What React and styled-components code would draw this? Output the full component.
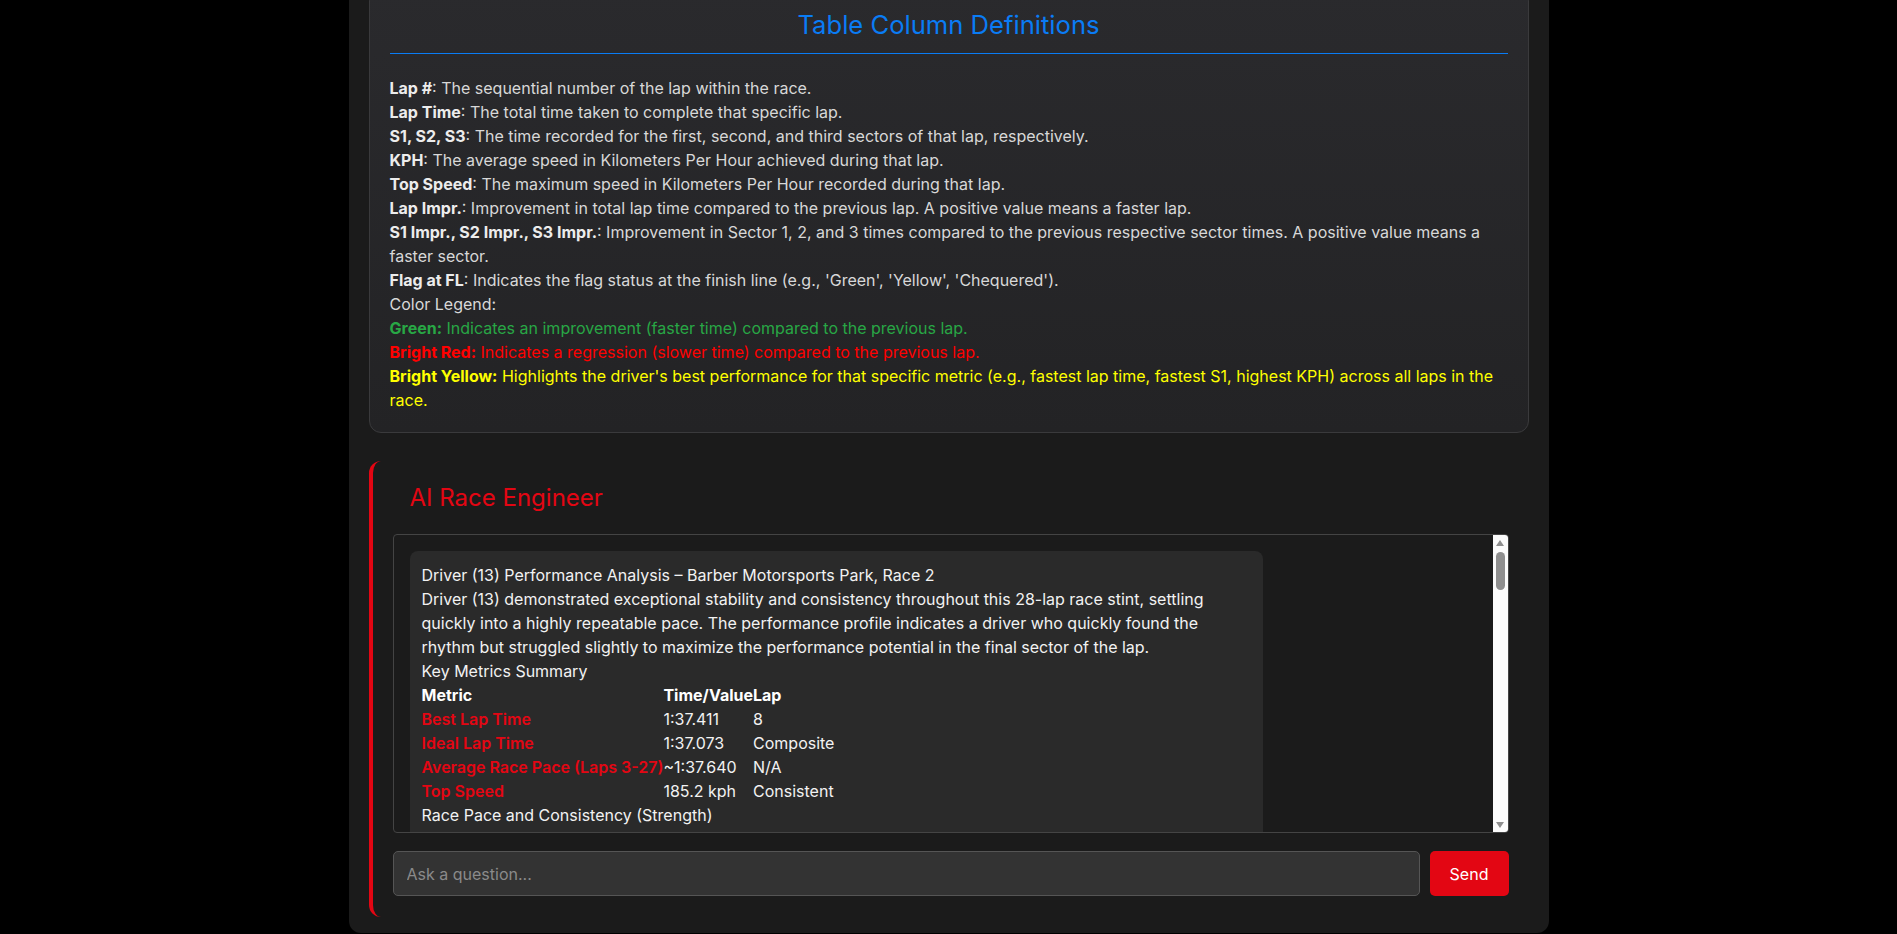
import React from "react";
import styled, { createGlobalStyle } from "styled-components";

const GlobalStyle = createGlobalStyle`
  html, body {
    margin: 0;
    padding: 0;
    background: #000;
    font-family: Inter, "Noto Sans", Arial, sans-serif;
    color: #e0e0e0;
  }
  * { box-sizing: border-box; }
`;

const Page = styled.div`
  width: 1200px;
  margin: -31px auto 0;
  background: #1b1b1b;
  border-radius: 0 0 12px 12px;
  padding: 20px 20px 16px;
  display: flex;
  flex-direction: column;
  gap: 28px;
`;

const DefCard = styled.section`
  background: linear-gradient(180deg, #2a2a2d 0%, #232325 100%);
  border: 1px solid #3a3a3c;
  border-radius: 12px;
  padding: 20px 20px 20px;
`;

const DefTitle = styled.h2`
  margin: 0 0 22px;
  padding-bottom: 14px;
  border-bottom: 1px solid #0a7cf5;
  color: #0a7cf5;
  font-size: 25.6px;
  line-height: 29px;
  font-weight: 400;
  text-align: center;
`;

const DefLine = styled.div`
  font-size: 16px;
  line-height: 24px;
  color: ${(p) => p.$color || "#d8d8d8"};
  b {
    font-weight: 700;
    color: ${(p) => p.$color || "#ececec"};
  }
`;

const EngineerSection = styled.section`
  border-left: 4px solid #e30613;
  border-radius: 12px;
  padding: 22px 20px 21px 20px;
  display: flex;
  flex-direction: column;
`;

const EngineerTitle = styled.h3`
  margin: 0 0 22px 17px;
  color: #e30613;
  font-size: 24px;
  line-height: 29px;
  font-weight: 400;
`;

const ChatBox = styled.div`
  height: 299px;
  border: 1px solid #444;
  border-radius: 4px;
  background: #1b1b1b;
  display: flex;
  overflow: hidden;
`;

const ChatScroll = styled.div`
  flex: 1;
  min-width: 0;
  overflow: hidden;
  padding: 16px;
`;

const ScrollTrack = styled.div`
  width: 15px;
  flex: none;
  background: #fcfcfc;
  display: flex;
  flex-direction: column;
  align-items: center;
  padding: 5px 0 4px;
`;

const Arrow = styled.div`
  width: 0;
  height: 0;
  border-left: 4.5px solid transparent;
  border-right: 4.5px solid transparent;
  ${(p) =>
    p.$down
      ? "border-top: 6px solid #8f8f8f; margin-top: auto;"
      : "border-bottom: 6px solid #8f8f8f;"}
`;

const Thumb = styled.div`
  width: 9px;
  height: 38px;
  margin-top: 6px;
  border-radius: 5px;
  background: #8f8f8f;
`;

const Bubble = styled.div`
  width: 80%;
  background: #2a2a2a;
  border-radius: 8px;
  padding: 12px;
  color: #f2f2f2;
  font-size: 16px;
  line-height: 24px;
`;

const Para = styled.div``;

const MetricTable = styled.table`
  border-collapse: collapse;
  border-spacing: 0;
  font-size: 16px;
  line-height: 24px;
  th, td {
    padding: 0;
    text-align: left;
    vertical-align: top;
  }
  th {
    font-weight: 700;
    color: #fff;
  }
`;

const MetricName = styled.td`
  color: #e30613;
  font-weight: 600;
`;

const InputRow = styled.form`
  margin-top: 18px;
  display: flex;
  gap: 10px;
`;

const AskInput = styled.input`
  flex: 1;
  height: 45px;
  background: #333;
  border: 1px solid #555;
  border-radius: 5px;
  padding: 0 13px;
  color: #eee;
  font-family: Inter, "Noto Sans", Arial, sans-serif;
  font-size: 16px;
  outline: none;
  &::placeholder { color: #8a8a8a; }
`;

const SendButton = styled.button`
  width: 79px;
  height: 45px;
  border: none;
  border-radius: 5px;
  background: #e30613;
  color: #fff;
  font-family: Inter, "Noto Sans", Arial, sans-serif;
  font-size: 16px;
  cursor: pointer;
`;

const defs = [
  ["Lap #", "The sequential number of the lap within the race."],
  ["Lap Time", "The total time taken to complete that specific lap."],
  ["S1, S2, S3", "The time recorded for the first, second, and third sectors of that lap, respectively."],
  ["KPH", "The average speed in Kilometers Per Hour achieved during that lap."],
  ["Top Speed", "The maximum speed in Kilometers Per Hour recorded during that lap."],
  ["Lap Impr.", "Improvement in total lap time compared to the previous lap. A positive value means a faster lap."],
  ["S1 Impr., S2 Impr., S3 Impr.", "Improvement in Sector 1, 2, and 3 times compared to the previous respective sector times. A positive value means a faster sector."],
  ["Flag at FL", "Indicates the flag status at the finish line (e.g., 'Green', 'Yellow', 'Chequered')."],
];

const legend = [
  ["Green:", "Indicates an improvement (faster time) compared to the previous lap.", "#28a745"],
  ["Bright Red:", "Indicates a regression (slower time) compared to the previous lap.", "#ff0000"],
  ["Bright Yellow:", "Highlights the driver's best performance for that specific metric (e.g., fastest lap time, fastest S1, highest KPH) across all laps in the race.", "#ffff00"],
];

const metrics = [
  ["Best Lap Time", "1:37.411", "8"],
  ["Ideal Lap Time", "1:37.073", "Composite"],
  ["Average Race Pace (Laps 3-27)", "~1:37.640", "N/A"],
  ["Top Speed", "185.2 kph", "Consistent"],
];

const pace = [
  ["Phase", "Laps", "Avg. Lap (approx.)"],
  ["Opening Stint", "1-7", "1:37.9"],
  ["Mid Race", "8-20", "1:37.6"],
  ["Closing Stint", "21-28", "1:37.7"],
];

export default function App() {
  return (
    <>
      <GlobalStyle />
      <Page>
        <DefCard>
          <DefTitle>Table Column Definitions</DefTitle>
          {defs.map(([k, v]) => (
            <DefLine key={k}>
              <b>{k}</b>: {v}
            </DefLine>
          ))}
          <DefLine>Color Legend:</DefLine>
          {legend.map(([k, v, c]) => (
            <DefLine key={k} $color={c}>
              <b>{k}</b> {v}
            </DefLine>
          ))}
        </DefCard>

        <EngineerSection>
          <EngineerTitle>AI Race Engineer</EngineerTitle>
          <ChatBox>
            <ChatScroll>
              <Bubble>
                <Para>Driver (13) Performance Analysis – Barber Motorsports Park, Race 2</Para>
                <Para>
                  Driver (13) demonstrated exceptional stability and consistency throughout this 28-lap race stint, settling
                  quickly into a highly repeatable pace. The performance profile indicates a driver who quickly found the
                  rhythm but struggled slightly to maximize the performance potential in the final sector of the lap.
                </Para>
                <Para>Key Metrics Summary</Para>
                <MetricTable>
                  <thead>
                    <tr>
                      <th>Metric</th>
                      <th>Time/Value</th>
                      <th>Lap</th>
                    </tr>
                  </thead>
                  <tbody>
                    {metrics.map(([m, t, l]) => (
                      <tr key={m}>
                        <MetricName>{m}</MetricName>
                        <td>{t}</td>
                        <td>{l}</td>
                      </tr>
                    ))}
                  </tbody>
                </MetricTable>
                <Para>Race Pace and Consistency (Strength)</Para>
                <MetricTable>
                  <thead>
                    <tr>
                      {pace[0].map((h) => (
                        <th key={h}>{h}</th>
                      ))}
                    </tr>
                  </thead>
                  <tbody>
                    {pace.slice(1).map(([a, b, c]) => (
                      <tr key={a}>
                        <MetricName>{a}</MetricName>
                        <td>{b}</td>
                        <td>{c}</td>
                      </tr>
                    ))}
                  </tbody>
                </MetricTable>
              </Bubble>
            </ChatScroll>
            <ScrollTrack>
              <Arrow />
              <Thumb />
              <Arrow $down />
            </ScrollTrack>
          </ChatBox>
          <InputRow onSubmit={(e) => e.preventDefault()}>
            <AskInput placeholder="Ask a question..." />
            <SendButton type="submit">Send</SendButton>
          </InputRow>
        </EngineerSection>
      </Page>
    </>
  );
}
